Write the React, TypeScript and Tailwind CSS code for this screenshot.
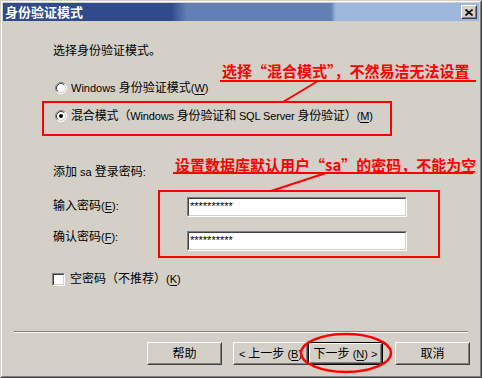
import React from "react";

const ui = "font-['Liberation_Sans','Noto_Sans_CJK_SC',sans-serif] text-[12px] leading-[14px] text-black";
const note = "font-['Noto_Sans_CJK_SC',sans-serif] text-[15px] leading-[16px] font-bold text-[#ff0000]";

// latin runs are drawn a bit smaller, like Tahoma 8pt next to 12px hanzi
function L({ children }: { children: React.ReactNode }) {
  return <span className="text-[11px]">{children}</span>;
}

function Key({ k }: { k: string }) {
  return (
    <L>
      (<u className="underline-offset-2">{k}</u>)
    </L>
  );
}

function Radio({ checked }: { checked?: boolean }) {
  return (
    <svg width="12" height="12" viewBox="0 0 12 12" className="shrink-0">
      <circle cx="6" cy="6" r="5" fill="#ffffff" />
      <path d="M2.11 9.89 A5.5 5.5 0 0 1 9.89 2.11" fill="none" stroke="#808080" strokeWidth="1" />
      <path d="M9.89 2.11 A5.5 5.5 0 0 1 2.11 9.89" fill="none" stroke="#ffffff" strokeWidth="1" />
      <path d="M2.82 9.18 A4.5 4.5 0 0 1 9.18 2.82" fill="none" stroke="#404040" strokeWidth="1" />
      <path d="M9.18 2.82 A4.5 4.5 0 0 1 2.82 9.18" fill="none" stroke="#d4d0c8" strokeWidth="1" />
      {checked && <circle cx="6" cy="6" r="2" fill="#000000" />}
    </svg>
  );
}

function Sunken({ className, children }: { className?: string; children?: React.ReactNode }) {
  return (
    <div className={`border border-t-[#808080] border-l-[#808080] border-r-white border-b-white ${className ?? ""}`}>
      <div className="h-full border border-t-[#404040] border-l-[#404040] border-r-[#d4d0c8] border-b-[#d4d0c8] bg-white">
        {children}
      </div>
    </div>
  );
}

function PasswordBox() {
  return (
    <Sunken className="w-[220px] h-[20px]">
      <div className="pl-[1px] pt-[2px] font-['Liberation_Sans',sans-serif] text-[11px] leading-[11px] text-black">
        **********
      </div>
    </Sunken>
  );
}

function Button({ children, isDefault }: { children: React.ReactNode; isDefault?: boolean }) {
  const face = (
    <div className="h-full border border-t-white border-l-white border-r-[#404040] border-b-[#404040]">
      <div className="h-full flex items-center justify-center whitespace-pre border border-t-[#d4d0c8] border-l-[#d4d0c8] border-r-[#808080] border-b-[#808080] bg-[#d4d0c8]">
        <span>{children}</span>
      </div>
    </div>
  );
  if (isDefault) {
    return <div className="w-[75px] h-[23px] border border-black">{face}</div>;
  }
  return <div className="w-[75px] h-[23px]">{face}</div>;
}

export default function App() {
  return (
    <div className={`relative w-[482px] h-[378px] bg-[#d4d0c8] border border-t-[#d4d0c8] border-l-[#d4d0c8] border-r-[#404040] border-b-[#404040] ${ui}`}>
      <div className="h-full border border-t-white border-l-white border-r-[#808080] border-b-[#808080] p-[1px] flex flex-col">
        {/* title bar */}
        <div className="h-[18px] flex items-center justify-between pl-[2px] pr-[2px] bg-[linear-gradient(to_right,#304a8b_0px,#304a8b_168px,#6380b5_184px,#6380b5_328px,#9eb8dd_333px,#9eb8dd_100%)]">
          <span className="font-['Noto_Sans_CJK_SC',sans-serif] text-[13px] leading-[14px] font-bold text-white">身份验证模式</span>
          <div className="w-[16px] h-[14px] border border-t-white border-l-white border-r-[#404040] border-b-[#404040]">
            <div className="h-full flex items-center justify-center border border-t-[#d4d0c8] border-l-[#d4d0c8] border-r-[#808080] border-b-[#808080] bg-[#d4d0c8]">
              <svg width="8" height="7" viewBox="0 0 8 7">
                <path d="M0.5 0.5 L7.5 6.5 M7.5 0.5 L0.5 6.5" stroke="#000" strokeWidth="1.6" />
              </svg>
            </div>
          </div>
        </div>

        {/* body */}
        <div className="flex flex-col">
          <div className="ml-[50px] mt-[23px]">选择身份验证模式。</div>

          <div className="ml-[52px] mt-[23px] flex items-center gap-[4px]">
            <Radio />
            <span><L>Windows </L>身份验证模式<Key k="W" /></span>
          </div>

          <div className="ml-[39px] mt-[6px] w-[350px] h-[35px] border-2 border-[#ff0000] pl-[11px] pt-[6px]">
            <div className="flex items-center gap-[4px]">
              <Radio checked />
              <span className="tracking-[-0.15px]">
                混合模式（<L>Windows </L>身份验证和<L> SQL Server </L>身份验证）<Key k="M" />
              </span>
            </div>
          </div>

          <div className="ml-[50px] mt-[29px]">添加<L> sa </L>登录密码<L>:</L></div>

          <div className="ml-[50px] mt-[11px] flex">
            <div className="w-[105px] flex flex-col pt-[9px] gap-[17px]">
              <span>输入密码<Key k="E" /><L>:</L></span>
              <span>确认密码<Key k="F" /><L>:</L></span>
            </div>
            <div className="w-[282px] h-[68px] border-2 border-[#ff0000] pl-[27px] pt-[5px] flex flex-col gap-[14px]">
              <PasswordBox />
              <PasswordBox />
            </div>
          </div>

          <div className="ml-[49px] mt-[14px] flex items-center gap-[5px] h-[14px]">
            <Sunken className="w-[13px] h-[13px]" />
            <span>空密码（不推荐）<Key k="K" /></span>
          </div>

          <div className="ml-[11px] mt-[45px] w-[454px] border-t border-t-[#808080] border-b border-b-white" />

          <div className="ml-[144px] mt-[9px] flex">
            <Button>帮助</Button>
            <div className="ml-[11px] flex">
              <Button><L>&lt; </L>上一步<L> </L><Key k="B" /></Button>
              <Button isDefault>下一步<L> </L><Key k="N" /><L> &gt;</L></Button>
            </div>
            <div className="ml-[12px]">
              <Button>取消</Button>
            </div>
          </div>
        </div>
      </div>

      {/* annotations */}
      <div className={`absolute left-[221px] top-[62px] ${note}`}>选择“混合模式”，不然易洁无法设置</div>
      <div className={`absolute left-[174px] top-[156px] ${note}`}>设置数据库默认用户“sa”的密码，不能为空</div>
      <svg className="absolute left-[-1px] top-[-1px] pointer-events-none" width="482" height="378" viewBox="0 0 482 378">
        <line x1="220" y1="81" x2="476" y2="81" stroke="#ff0000" strokeWidth="2" />
        <line x1="318" y1="81" x2="283" y2="102" stroke="#ff0000" strokeWidth="2" />
        <line x1="173" y1="173" x2="473" y2="173" stroke="#ff0000" strokeWidth="2" />
        <line x1="326" y1="173" x2="271" y2="191" stroke="#ff0000" strokeWidth="2" />
        <ellipse cx="346" cy="353" rx="45" ry="19" fill="none" stroke="#ff0000" strokeWidth="2.5" />
      </svg>
    </div>
  );
}
